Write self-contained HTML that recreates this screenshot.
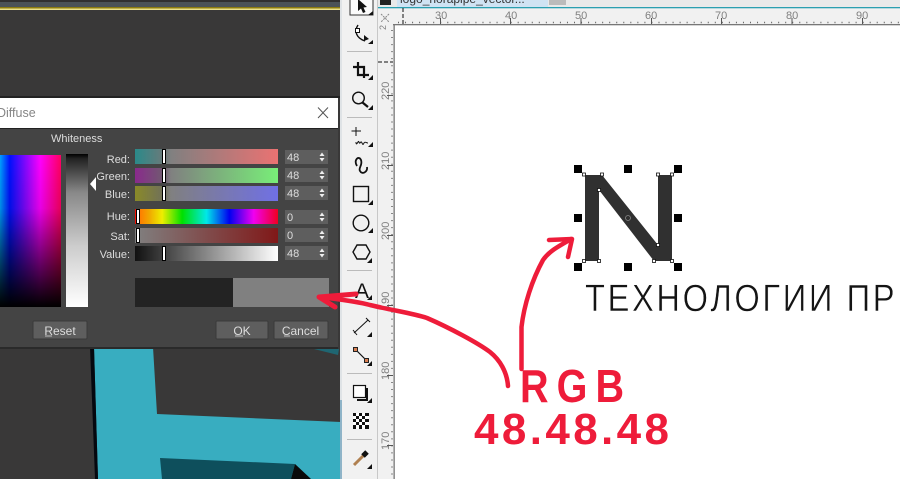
<!DOCTYPE html>
<html><head><meta charset="utf-8"><style>
html,body{margin:0;padding:0;background:#fff}
svg{display:block;font-family:"Liberation Sans","Noto Sans CJK SC",sans-serif}
.l{font-size:11px;fill:#ddd;text-anchor:end}
.n{font-size:11px;fill:#ddd}
.b{font-size:12px;fill:#ddd;text-anchor:middle;text-decoration:none}
.r{font-size:11px;fill:#808080}
.i{fill:none;stroke:#111;stroke-width:1.4}
</style></head><body>
<svg width="900" height="479" viewBox="0 0 900 479" xmlns="http://www.w3.org/2000/svg">
<defs>
<linearGradient id="gr"><stop offset="0" stop-color="#2a8a8a"/><stop offset=".2" stop-color="#6a7a7a"/><stop offset=".25" stop-color="#808080"/><stop offset="1" stop-color="#ea7272"/></linearGradient>
<linearGradient id="gg"><stop offset="0" stop-color="#8a2a8c"/><stop offset=".2" stop-color="#705a70"/><stop offset=".25" stop-color="#808080"/><stop offset="1" stop-color="#78ee78"/></linearGradient>
<linearGradient id="gb"><stop offset="0" stop-color="#8a8a28"/><stop offset=".2" stop-color="#70705a"/><stop offset=".25" stop-color="#808080"/><stop offset="1" stop-color="#7070e4"/></linearGradient>
<linearGradient id="gh"><stop offset="0" stop-color="#f50000"/><stop offset=".03" stop-color="#ff7a00"/><stop offset=".1" stop-color="#f0a800"/><stop offset=".19" stop-color="#eeee00"/><stop offset=".33" stop-color="#00e000"/><stop offset=".5" stop-color="#00e8e8"/><stop offset=".66" stop-color="#0000f0"/><stop offset=".83" stop-color="#f000f0"/><stop offset="1" stop-color="#f00020"/></linearGradient>
<linearGradient id="gs"><stop offset="0" stop-color="#808080"/><stop offset="1" stop-color="#801818"/></linearGradient>
<linearGradient id="gv"><stop offset="0" stop-color="#111"/><stop offset="1" stop-color="#fff"/></linearGradient>
<linearGradient id="gw" x1="0" y1="0" x2="0" y2="1"><stop offset="0" stop-color="#000"/><stop offset=".03" stop-color="#222"/><stop offset=".25" stop-color="#888"/><stop offset=".6" stop-color="#ccc"/><stop offset="1" stop-color="#fff"/></linearGradient>
<linearGradient id="gc"><stop offset="0" stop-color="#00a0ff"/><stop offset=".16" stop-color="#0010ff"/><stop offset=".66" stop-color="#ff00ff"/><stop offset="1" stop-color="#ff0060"/></linearGradient>
<linearGradient id="gd" x1="0" y1="0" x2="0" y2="1"><stop offset="0" stop-color="#000" stop-opacity="0"/><stop offset=".35" stop-color="#000" stop-opacity=".1"/><stop offset="1" stop-color="#000" stop-opacity="1"/></linearGradient>
</defs>

<!-- dark viewport -->
<rect x="0" y="0" width="341" height="479" fill="#393838"/>
<rect x="0" y="0" width="340" height="2" fill="#303030"/>
<rect x="0" y="2" width="340" height="5" fill="#4a5257"/>
<rect x="0" y="7" width="340" height="1.5" fill="#8a7a10"/>
<rect x="0" y="8.5" width="340" height="1.5" fill="#e8e08a"/>
<rect x="0" y="96" width="340" height="2" fill="#222"/>
<polygon points="94,347 153,347 157,414 341,422 341,479 98,479" fill="#38adc0"/>
<polygon points="90,347 94,347 98,479 95,479" fill="#05080f"/>
<polygon points="160,458 295,464 291,479 162,479" fill="#0e4f5c"/>
<polygon points="295,464 311,479 291,479" fill="#0a0a0a"/>
<polygon points="310,348 339,349 338,355" fill="#1f6672"/>

<!-- dialog -->
<rect x="0" y="98" width="338" height="250" fill="#444444"/>
<rect x="0" y="98" width="338" height="30" fill="#ffffff"/>
<rect x="0" y="128" width="338" height="1" fill="#222"/>
<rect x="0" y="347" width="338" height="2" fill="#2a2a2a"/>
<text x="-3" y="117" font-size="12.500" fill="#858585">Diffuse</text>
<path d="M318 107.500L328 118M328 107.500L318 118" stroke="#555" stroke-width="1" fill="none"/>
<text x="51" y="142" class="n">Whiteness</text>
<rect x="0" y="155" width="61" height="152" fill="url(#gc)"/>
<rect x="0" y="155" width="61" height="152" fill="url(#gd)"/>
<rect x="66" y="154" width="22" height="153" fill="url(#gw)"/>
<polygon points="90,184 96,177 96,191" fill="#fff"/>

<text x="130" y="163" class="l">Red:</text>
<text x="130" y="180" class="l">Green:</text>
<text x="130" y="198" class="l">Blue:</text>
<text x="130" y="220" class="l">Hue:</text>
<text x="130" y="240" class="l">Sat:</text>
<text x="130" y="258" class="l">Value:</text>

<rect x="135" y="149" width="143" height="15" fill="url(#gr)"/>
<rect x="135" y="168" width="143" height="15" fill="url(#gg)"/>
<rect x="135" y="186" width="143" height="15" fill="url(#gb)"/>
<rect x="135" y="209" width="143" height="15" fill="url(#gh)"/>
<rect x="135" y="228" width="143" height="15" fill="url(#gs)"/>
<rect x="135" y="246" width="143" height="15" fill="url(#gv)"/>
<g fill="#fff" stroke="#000" stroke-width="1">
<rect x="162.500" y="149.500" width="3" height="14"/>
<rect x="162.500" y="168.500" width="3" height="14"/>
<rect x="162.500" y="186.500" width="3" height="14"/>
<rect x="136.500" y="209.500" width="3" height="14"/>
<rect x="136.500" y="228.500" width="3" height="14"/>
<rect x="162.500" y="246.500" width="3" height="14"/>
</g>

<g fill="#5e5e5e">
<rect x="285" y="150" width="43" height="14"/>
<rect x="285" y="168" width="43" height="14"/>
<rect x="285" y="186" width="43" height="14"/>
<rect x="285" y="210" width="43" height="14"/>
<rect x="285" y="228" width="43" height="14"/>
<rect x="285" y="246" width="43" height="14"/>
</g>
<text x="287" y="161" class="n">48</text>
<text x="287" y="179" class="n">48</text>
<text x="287" y="197" class="n">48</text>
<text x="287" y="221" class="n">0</text>
<text x="287" y="239" class="n">0</text>
<text x="287" y="257" class="n">48</text>
<g fill="#eee">
<path d="M322 156l-2.500 0 2.500-3.500 2.500 3.500zM322 158l-2.500 0 2.500 3.500 2.500-3.500z"/>
<path d="M322 174l-2.500 0 2.500-3.500 2.500 3.500zM322 176l-2.500 0 2.500 3.500 2.500-3.500z"/>
<path d="M322 192l-2.500 0 2.500-3.500 2.500 3.500zM322 194l-2.500 0 2.500 3.500 2.500-3.500z"/>
<path d="M322 216l-2.500 0 2.500-3.500 2.500 3.500zM322 218l-2.500 0 2.500 3.500 2.500-3.500z"/>
<path d="M322 234l-2.500 0 2.500-3.500 2.500 3.500zM322 236l-2.500 0 2.500 3.500 2.500-3.500z"/>
<path d="M322 252l-2.500 0 2.500-3.500 2.500 3.500zM322 254l-2.500 0 2.500 3.500 2.500-3.500z"/>
</g>

<rect x="135" y="278" width="98" height="29" fill="#232323"/>
<rect x="233" y="278" width="96" height="29" fill="#808080"/>

<g fill="#5e5e5e" stroke="#3a3a3a" stroke-width="1">
<rect x="33" y="321" width="54" height="18" rx="1"/>
<rect x="216" y="321" width="52" height="18" rx="1"/>
<rect x="274" y="321" width="54" height="18" rx="1"/>
</g>
<text x="60" y="335" class="b">Reset</text>
<text x="242" y="335" class="b">OK</text>
<text x="300.500" y="335" class="b">Cancel</text>
<path d="M45 336h7M235 336h8M284 336h6" stroke="#ddd" stroke-width=".8"/>

<!-- window edge -->
<rect x="340" y="0" width="2" height="479" fill="#dfe3e6"/>
<rect x="340" y="400" width="2" height="79" fill="#8fb4c8"/>

<!-- toolbar -->
<rect x="342" y="0" width="35" height="479" fill="#f1f1f1"/>
<rect x="377" y="0" width="1" height="479" fill="#c8c8c8"/>
<rect x="378" y="8" width="522" height="17" fill="#f1f1f1"/>
<rect x="378" y="8" width="16" height="471" fill="#f1f1f1"/>
<rect x="393" y="24" width="507" height="1.300" fill="#777"/>
<rect x="393.500" y="24" width="1.300" height="455" fill="#777"/>

<!-- tab strip -->
<rect x="378" y="0" width="522" height="7" fill="#e9e9e9"/>
<rect x="397" y="0" width="151" height="7" fill="#cfe3f3"/>
<rect x="380" y="0" width="11" height="5" fill="#222"/>
<rect x="549" y="0" width="17" height="5" fill="#bbb"/>
<text x="400" y="3" font-size="12" fill="#333">logo_norapipe_vector...</text>
<rect x="378" y="7" width="522" height="1.300" fill="#2a9fb0"/>

<!-- rulers -->
<g class="r">
<text x="435" y="19" class="r">30</text><text x="505" y="19" class="r">40</text>
<text x="575" y="19" class="r">50</text><text x="645" y="19" class="r">60</text>
<text x="715" y="19" class="r">70</text><text x="786" y="19" class="r">80</text>
<text x="856" y="19" class="r">90</text>
<text transform="translate(389,100) rotate(-90)" class="r">220</text>
<text transform="translate(389,170) rotate(-90)" class="r">210</text>
<text transform="translate(389,240) rotate(-90)" class="r">200</text>
<text transform="translate(389,310) rotate(-90)" class="r">190</text>
<text transform="translate(389,380) rotate(-90)" class="r">180</text>
<text transform="translate(389,450) rotate(-90)" class="r">170</text>
<text transform="translate(386,30) rotate(-90)" class="r" style="font-size:9px">2</text>
</g>
<path d="M398 22.500H900" stroke="#666" stroke-width="1.500" stroke-dasharray="1 6.040"/>
<path d="M392 30V479" stroke="#666" stroke-width="1.500" stroke-dasharray="1 6.040"/>
<path d="M440.500 18V24M510.500 18V24M581 18V24M651.500 18V24M721.500 18V24M792 18V24M862.500 18V24" stroke="#555"/>
<path d="M387 95.500H393M387 165.500H393M387 235.500H393M387 305.500H393M387 375.500H393M387 445.500H393" stroke="#555"/>
<path d="M378 62H393" stroke="#111" stroke-dasharray="4 2"/>
<path d="M403 8V24" stroke="#111" stroke-dasharray="4 2"/>
<path d="M381 14l8 8M389 14l-8 8" stroke="#888" stroke-dasharray="2 1"/>

<!-- toolbox -->
<path d="M350 0V15H373V0" fill="#fbfbfb" stroke="#333" stroke-width="1"/>
<path d="M358 -1V11L361 8.500L363 13L365.500 12L363.500 7.500L367 7Z" fill="#111"/>
<g fill="#111">
<path d="M373 11l-5 4h5z"/><path d="M373 40l-5 4h5z"/><path d="M373 75l-5 5h5z"/><path d="M373 105l-5 5h5z"/><path d="M373 142l-5 5h5z"/>
<path d="M373 200l-5 5h5z"/><path d="M373 228l-5 5h5z"/><path d="M372 258l-5 5h5z"/><path d="M372 295l-5 5h5z"/><path d="M372 332l-5 5h5z"/><path d="M372 361l-5 5h5z"/><path d="M372 398l-5 5h5z"/><path d="M372 464l-5 5h5z"/>
</g>
<g stroke="#bbb"><path d="M347 51.500H372M347 117.500H372M347 270.500H372M347 373.500H372M347 439.500H372"/></g>
<!-- shape -->
<path class="i" d="M358 25C354 31 356 38 365 41"/><rect x="355.500" y="28.500" width="4" height="4" fill="#fff" stroke="#111"/><path d="M364 35l5 4-5 2z" fill="#111"/>
<!-- crop -->
<path d="M358 62V75H369M353 67H364V78" fill="none" stroke="#111" stroke-width="2.200"/>
<!-- zoom -->
<circle cx="358.500" cy="98" r="5.800" class="i"/><path d="M362.500 102.500L368 107" stroke="#111" stroke-width="2.200"/>
<!-- freehand -->
<path d="M356 127V136M351.500 131H361" stroke="#111" stroke-width="1"/>
<path class="i" style="stroke-width:1" d="M356 142c0 3 1 2 2 0s1 2 2 1 1-2 2 0 1 2 2 0 2 0 4 0"/>
<!-- curve -->
<path class="i" style="stroke-width:1.800" d="M357 166C353 160 359 155 361 160C363 165 358 168 360 171C362 175 368 172 367 167"/>
<!-- rect -->
<rect x="353.500" y="186.500" width="15" height="15" class="i"/>
<!-- ellipse -->
<circle cx="361" cy="223" r="7.800" class="i"/>
<!-- polygon -->
<path class="i" d="M357 245H366L370 252L366 259H357L353 252Z"/>
<!-- text A -->
<text x="355" y="298" font-size="21" fill="#111">A</text>
<!-- dimension -->
<path d="M354 333L368 320" stroke="#111"/><path d="M353 330L357 335M366 318L370 322" stroke="#111"/>
<!-- connector -->
<path d="M356 350L366 360" stroke="#111" stroke-width="1.200"/>
<rect x="353.500" y="347.500" width="4" height="4" fill="#d87e50" stroke="#222"/><rect x="364.500" y="358.500" width="4" height="4" fill="#d87e50" stroke="#222"/>
<!-- shadow -->
<rect x="353.500" y="385.500" width="12" height="12" fill="#fff" stroke="#111" stroke-width="1.200"/>
<path d="M367 388V400H357" fill="none" stroke="#111" stroke-width="2"/>
<!-- checker -->
<rect x="353" y="413" width="16" height="16" fill="#fff"/>
<g fill="#111">
<rect x="353" y="413" width="3" height="3"/><rect x="359" y="413" width="3" height="3"/><rect x="365" y="413" width="4" height="3"/>
<rect x="356" y="416" width="3" height="3"/><rect x="362" y="416" width="3" height="3"/>
<rect x="353" y="419" width="3" height="3"/><rect x="359" y="419" width="3" height="3"/><rect x="365" y="419" width="4" height="3"/>
<rect x="356" y="422" width="3" height="3"/><rect x="362" y="422" width="3" height="3"/>
<rect x="353" y="425" width="3" height="4"/><rect x="359" y="425" width="3" height="4"/><rect x="365" y="425" width="4" height="4"/>
</g>
<!-- eyedropper -->
<path d="M354 465L364 455" stroke="#b08050" stroke-width="3"/><path d="M363 456L367 452" stroke="#111" stroke-width="5"/>

<!-- N logo -->
<polygon points="585,175 602,175 658,245 658,175 672,175 672,261 654,261 599,190 599,261 585,261" fill="#303030"/>
<g fill="#000">
<rect x="574" y="165" width="8" height="8"/><rect x="624" y="165" width="8" height="8"/><rect x="674" y="165" width="8" height="8"/>
<rect x="574" y="214" width="8" height="8"/><rect x="674" y="214" width="8" height="8"/>
<rect x="574" y="263" width="8" height="8"/><rect x="624" y="263" width="8" height="8"/><rect x="674" y="263" width="8" height="8"/>
</g>
<g fill="#fff" stroke="#111" stroke-width=".8">
<rect x="582.500" y="173" width="3" height="3"/><rect x="600.500" y="173" width="3" height="3"/><rect x="656.500" y="173" width="3" height="3"/><rect x="670.500" y="173" width="3" height="3"/>
<rect x="597.500" y="188.500" width="3" height="3"/><rect x="656.500" y="243.500" width="3" height="3"/>
<rect x="582.500" y="259.500" width="3" height="3"/><rect x="597.500" y="259.500" width="3" height="3"/><rect x="652.500" y="259.500" width="3" height="3"/><rect x="670.500" y="259.500" width="3" height="3"/>
</g>
<circle cx="628" cy="218" r="2.500" fill="none" stroke="#888" stroke-width=".8"/>
<text transform="translate(585,311) scale(.86,1)" x="0" y="0" font-size="38" fill="#141414" stroke="#fff" stroke-width=".5" textLength="360" lengthAdjust="spacing">ТЕХНОЛОГИИ ПР</text>

<!-- red annotation -->
<g fill="none" stroke="#ee1c3a" stroke-width="4.500" stroke-linecap="round" stroke-linejoin="round">
<path d="M508 386C507 372 500 360 490 352C478 343 450 328 427 318C412 313 395 311 370 305C355 301 335 299 320 297"/>
<path d="M319 297L356 294M319 297L335 307" stroke-width="5"/>
<path d="M521.500 369V327C524 305 532 280 543 260C550 250 560 246 571 239"/>
<path d="M572 239L549 240M572 239L568 257"/>
</g>
<text transform="translate(520,402) scale(.86,1)" x="0" y="0" font-size="46" font-weight="bold" fill="#ee1c3a" textLength="121" lengthAdjust="spacing">RGB</text>
<text x="474" y="444" font-size="44" font-weight="bold" fill="#ee1c3a" textLength="195" lengthAdjust="spacing">48.48.48</text>
</svg>
</body></html>
